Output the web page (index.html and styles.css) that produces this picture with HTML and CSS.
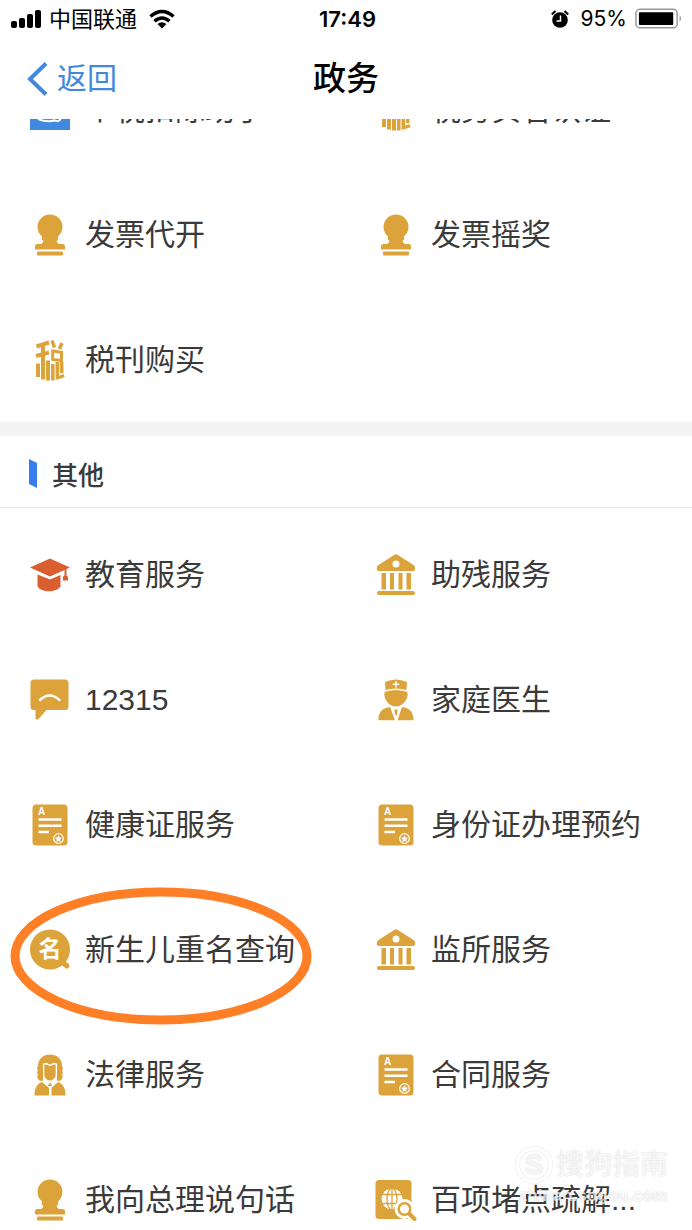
FILE: index.html
```html
<!DOCTYPE html>
<html lang="zh-CN">
<head>
<meta charset="utf-8">
<meta name="viewport" content="width=device-width, initial-scale=1">
<title>政务</title>
<link rel="stylesheet" href="styles.css">
</head>
<body>
<svg class="defs" aria-hidden="true">
  <symbol id="stamp" viewBox="0 0 44 44">
    <path d="M22 1.500C15 1.500 9.500 7 9.500 14c0 4.500 2.200 7.500 4.600 9.400-.8 2 0 3.600 1.200 4.300-.2 1.500-1 2.800-2.300 3.300H9.500A2.500 2.500 0 0 0 7 33.500V36.500h30v-3a2.500 2.500 0 0 0-2.500-2.500H31c-1.300-.5-2.100-1.800-2.300-3.300 1.200-.7 2-2.300 1.200-4.300 2.400-1.900 4.600-4.900 4.600-9.400C34.500 7 29 1.500 22 1.500Z"/>
    <rect x="9" y="38.500" width="26" height="4" rx="1"/>
  </symbol>
  <symbol id="tax" viewBox="0 0 44 44">
    <g fill="none" stroke="currentColor">
      <path stroke-width="4" d="M8.500 8.500 21 4.500M8 18 21 14.500M15 7v34.500M10 25.500V39M20 22.500V42.500"/>
      <path stroke-width="3.500" d="M24 2.500l2.500 7M34 5l-2.500 6"/>
      <path stroke-width="3" d="M24.700 13v8.500l8.800 1V14.200z"/>
      <path stroke-width="3.500" d="M24.800 26V42.500M29.300 24V41.500M33.700 24v11M31 39.500l5-2"/>
    </g>
  </symbol>
  <symbol id="bank" viewBox="0 0 44 44">
    <path fill-rule="evenodd" d="M20.500 1.800a3 3 0 0 1 3 0L39.500 12c2.500 1.500 2 6 0 6H4.500c-2 0-2.500-4.500 0-6ZM22 7.500a3.500 3.500 0 1 0 0 7 3.500 3.500 0 0 0 0-7Z"/>
    <path d="M7.500 20h4.500V36.500H7.500zM16 20h4V36.500h-4zM24.500 20h4V36.500h-4zM32.500 20h4.500V36.500h-4.500z"/>
    <rect x="3" y="38" width="38" height="4" rx="2"/>
  </symbol>
  <symbol id="cap" viewBox="0 0 44 44">
    <path d="M22 5.500 2 14.500l20 9 14.500-6.500v5.500c-2 1.200-1.500 2-1.500 5h5c0-3 .3-4-1.500-5v-6.500L42 14.500Z"/>
    <path d="M9.500 21.500v12c4 6.300 19 6.300 23 0V22L22 26.500Z"/>
  </symbol>
  <symbol id="chat" viewBox="0 0 44 44">
    <path d="M6 1.500h31A3.500 3.500 0 0 1 40.500 5V28.500A3.500 3.500 0 0 1 37 32H18.500L10.500 41Q8 42.500 7.500 40.500V32H6A3.500 3.500 0 0 1 2.500 28.500V5A3.500 3.500 0 0 1 6 1.500Z"/>
    <path d="M12 22q9.500-9 19.500 0" fill="none" stroke="#fff" stroke-width="2.500" stroke-linecap="round"/>
  </symbol>
  <symbol id="doctor" viewBox="0 0 44 44">
    <path d="M11 4Q22-1 33 4l-.5 8Q22 9 11.500 12Z"/>
    <path d="M22 3v6.500M18.800 6.200h6.400" stroke="#fff" stroke-width="1.500"/>
    <path d="M11.500 13.800q10.500-3.500 21 0c1 0 1.500 2 1 4-1 6-6 10.700-11.500 10.700S11.500 24 10.500 17.800c-.5-2 0-4 1-4Z"/>
    <path d="M16 29 21 42.300H5.500q-1.500 0-1-2.300c1-7.500 5-10 11.500-11ZM28 29l-4.500 13.300H38.500q1.500 0 1-2.300c-1-7.500-5-10-11.500-11ZM20.300 31.500h3.400l-.7 6h-1.500Z"/>
  </symbol>
  <symbol id="cert" viewBox="0 0 44 44">
    <rect x="4.500" y="1.500" width="35" height="41" rx="3.500"/>
    <path d="M10.500 16.500h23M10.500 22.700h23M10.500 29H21" stroke="#fff" stroke-width="2.500"/>
    <circle cx="30.500" cy="35.500" r="4.800" fill="none" stroke="#fff" stroke-width="1.200"/>
    <path d="m30.500 32 1.100 2.400 2.500.3-1.900 1.700.5 2.500-2.200-1.200-2.200 1.200.5-2.500-1.900-1.700 2.500-.3Z" fill="#fff"/>
  </symbol>
  <symbol id="name" viewBox="0 0 44 44">
    <circle cx="22" cy="21.500" r="20"/>
    <path d="m33 33 6 5" stroke="currentColor" stroke-width="5" stroke-linecap="round"/>
  </symbol>
  <symbol id="judge" viewBox="0 0 44 44">
    <path d="M22 1.500C14 1.500 10 7 10 13c-1.500 2-1 3.500 0 4.500-1.300 1.500-1 3 0 4.200-1 1.500-.8 3 .2 4.300 1 2 3 2.500 5 1.500l-.4-17 3.700-.8 3.500 2 3.500-2 3.700.8-.4 17c2 1 4 .5 5-1.500 1-1.300 1.200-2.800.2-4.300 1-1.200 1.300-2.700 0-4.200 1-1 1.500-2.500 0-4.500 0-6-4-11.500-12-11.500Z"/>
    <path d="M16.300 11.500q3 0 5.700 1.500 2.700-1.500 5.700-1.500v9.500c0 4-3 6.500-5.700 6.500s-5.700-2.500-5.700-6.500Z"/>
    <path d="M14 29 21 35V42.500H6.500c0-7 2-11.500 7.500-13.500ZM30 29l-6.500 6v7.500h14c0-7-2-11.500-7.500-13.500Z"/>
    <path d="M22 29.500 19.500 33h5Z"/>
  </symbol>
  <symbol id="globe" viewBox="0 0 44 44">
    <rect x="1.500" y="2" width="36" height="39" rx="3.500"/>
    <g fill="none" stroke="#fff">
      <circle cx="18" cy="21" r="10.500" fill="#fff" stroke="none"/>
      <path d="M7 16.500h22M7 25.500h22M18 10v22" stroke="currentColor" stroke-width="1.300"/>
      <ellipse cx="18" cy="21" rx="5" ry="11" stroke="currentColor" stroke-width="1.300"/>
      <path d="m36 37 6 5" stroke-width="8"/>
      <circle cx="30.500" cy="31" r="8.500" fill="currentColor" stroke-width="3"/>
      <path d="m34.500 35 6 6" stroke="currentColor" stroke-width="4" stroke-linecap="round"/>
      <circle cx="30.500" cy="31" r="4.500" fill="#fff" stroke="none"/>
    </g>
  </symbol>
  <symbol id="card" viewBox="0 0 44 44">
    <rect x="2" y="2" width="40" height="40"/>
    <path d="M10 31q10 4 17 1M26 32q5 3 7-2" fill="none" stroke="#fff" stroke-width="2"/>
  </symbol>
</svg>

<header class="top">
  <div class="status">
    <div class="status-left">
      <svg class="signal" viewBox="0 0 30 20"><rect y="12" width="6" height="7" rx="2"/><rect x="8" y="9" width="6" height="10" rx="2"/><rect x="16" y="5" width="6" height="14" rx="2"/><rect x="24" y="1" width="6" height="18" rx="2"/></svg>
      <span>中国联通</span>
      <svg class="wifi" viewBox="0 0 26 20"><g fill="none" stroke="currentColor" stroke-width="3.500"><path d="M1.500 7.500q11.500-10 23 0"/><path d="M5.500 12.300q7.500-6.500 15 0"/></g><path d="m8.500 15 4.500 4.500 4.500-4.500q-4.500-3.500-9 0Z"/></svg>
    </div>
    <time class="clock">17:49</time>
    <div class="status-right">
      <svg class="alarm" viewBox="0 0 18 18"><circle cx="9" cy="10" r="7.800"/><path d="M9.500 5.500V11H5.500" fill="none" stroke="#fff" stroke-width="1.500"/><path d="M.8 4.500 4.500 1M17.200 4.500 13.500 1" stroke="currentColor" stroke-width="2"/></svg>
      <span>95%</span>
      <svg class="battery" viewBox="0 0 50 22"><rect x="1" y="1" width="42" height="19" rx="4" fill="none" stroke="#999" stroke-width="1.500"/><rect x="4" y="4" width="35" height="13" rx="1"/><path d="M45.500 7q3 3.500 0 7Z" fill="#999"/></svg>
    </div>
  </div>
  <nav class="nav">
    <a class="back" href="#"><svg viewBox="0 0 22 34"><path d="M20 1.500 4 17l16 15.500" fill="none" stroke="currentColor" stroke-width="4"/></svg>返回</a>
    <h1>政务</h1>
  </nav>
</header>

<main class="content">
  <section class="grid grid-scrolled">
    <a class="item" href="#"><span class="icon blue"><svg><use href="#card"/></svg></span><span>个税扣除助手</span></a>
    <a class="item" href="#"><span class="icon"><svg><use href="#tax"/></svg></span><span>税务实名认证</span></a>
    <a class="item" href="#"><span class="icon"><svg><use href="#stamp"/></svg></span><span>发票代开</span></a>
    <a class="item" href="#"><span class="icon"><svg><use href="#stamp"/></svg></span><span>发票摇奖</span></a>
    <a class="item" href="#"><span class="icon"><svg><use href="#tax"/></svg></span><span>税刊购买</span></a>
  </section>

  <section class="group">
    <h2><svg class="marker" viewBox="0 0 8 29"><path d="M0 0 8 4V29L0 25Z"/></svg>其他</h2>
    <div class="grid">
      <a class="item" href="#"><span class="icon red"><svg><use href="#cap"/></svg></span><span>教育服务</span></a>
      <a class="item" href="#"><span class="icon"><svg><use href="#bank"/></svg></span><span>助残服务</span></a>
      <a class="item" href="#"><span class="icon"><svg><use href="#chat"/></svg></span><span>12315</span></a>
      <a class="item" href="#"><span class="icon"><svg><use href="#doctor"/></svg></span><span>家庭医生</span></a>
      <a class="item" href="#"><span class="icon"><svg><use href="#cert"/></svg><b class="cert-letter">A</b></span><span>健康证服务</span></a>
      <a class="item" href="#"><span class="icon"><svg><use href="#cert"/></svg><b class="cert-letter">A</b></span><span>身份证办理预约</span></a>
      <a class="item" href="#"><span class="icon"><svg><use href="#name"/></svg><b class="name-letter">名</b></span><span>新生儿重名查询</span><svg class="ring" viewBox="0 0 302 138"><ellipse cx="151" cy="69" rx="146" ry="64" fill="none" stroke="#ff7f27" stroke-width="9"/></svg></a>
      <a class="item" href="#"><span class="icon"><svg><use href="#bank"/></svg></span><span>监所服务</span></a>
      <a class="item" href="#"><span class="icon"><svg><use href="#judge"/></svg></span><span>法律服务</span></a>
      <a class="item" href="#"><span class="icon"><svg><use href="#cert"/></svg><b class="cert-letter">A</b></span><span>合同服务</span></a>
      <a class="item" href="#"><span class="icon"><svg><use href="#stamp"/></svg></span><span>我向总理说句话</span></a>
      <a class="item" href="#"><span class="icon"><svg><use href="#globe"/></svg></span><span>百项堵点疏解...</span></a>
    </div>
  </section>
</main>

<div class="watermark">
  <div class="brand"><span class="brand-mark">S</span>搜狗指南</div>
  <div class="site">zhinan.sogou.com</div>
</div>
</body>
</html>
```

FILE: styles.css
```css
* { box-sizing: border-box; }

body {
  position: relative;
  display: flex;
  flex-direction: column;
  height: 100vh;
  margin: 0;
  overflow: hidden;
  background: #fff;
  color: #3a3a3a;
  font-family: "Liberation Sans", "Noto Sans CJK SC", sans-serif;
}

a { color: inherit; text-decoration: none; }
svg { flex: none; fill: currentColor; }
.defs { position: absolute; width: 0; height: 0; }

.top { flex: none; background: #fff; color: #000; }

.status {
  display: grid;
  grid-template-columns: 1fr auto 1fr;
  align-items: center;
  height: 38px;
  padding: 0 8px 0 11px;
  font-family: Inter, "Noto Sans CJK SC", sans-serif;
  font-size: 22px;
  line-height: 30px;
}
.status-left, .status-right { display: flex; align-items: center; gap: 8px; }
.status-left .wifi { margin-left: 4px; }
.status-right { justify-content: flex-end; }
.signal { width: 30px; height: 20px; }
.wifi { width: 26px; height: 20px; }
.alarm { width: 18px; height: 18px; margin-right: 4px; }
.status-right span { font-size: 21px; }
.battery { width: 49px; height: 22px; }
.clock { font-size: 22px; font-weight: 600; }

.nav {
  display: grid;
  grid-template-columns: 1fr auto 1fr;
  align-items: center;
  height: 81px;
  padding: 0 26px;
}
.back {
  display: flex;
  align-items: center;
  gap: 9px;
  color: #4189de;
  font-size: 30px;
  line-height: 40px;
}
.back svg { width: 22px; height: 34px; }
.nav h1 { margin: 0; font-size: 33px; font-weight: 500; line-height: 40px; }

.content { flex: 1; min-height: 0; overflow: hidden; }

.grid {
  display: grid;
  grid-template-columns: 1fr 1fr;
  grid-auto-rows: 125px;
}
.grid-scrolled { margin-top: -72px; }

.item {
  position: relative;
  display: flex;
  align-items: center;
  gap: 13px;
  padding-left: 28px;
  font-size: 30px;
  line-height: 40px;
  white-space: nowrap;
}
.icon { position: relative; flex: none; width: 44px; height: 44px; color: #dba33a; }
.icon svg { display: block; width: 44px; height: 44px; }
.icon.blue { color: #4189de; }
.icon.red { color: #d95f30; }
.cert-letter {
  position: absolute;
  top: 3px;
  left: 10px;
  color: #fff;
  font-size: 10px;
  line-height: 12px;
}
.name-letter {
  position: absolute;
  inset: 0;
  color: #fff;
  font-size: 23px;
  line-height: 42px;
  text-align: center;
}

.ring {
  position: absolute;
  top: 0;
  left: 10px;
  width: 302px;
  height: 138px;
}

.group { border-top: 14px solid #f4f4f4; }
.group h2 {
  display: flex;
  align-items: center;
  gap: 15px;
  height: 72px;
  margin: 0 0 4px;
  padding: 4px 29px 0;
  border-bottom: 1px solid #e6e6e6;
  font-size: 26px;
  font-weight: 500;
}
.marker { width: 8px; height: 29px; color: #377df0; }

.watermark {
  position: absolute;
  right: 24px;
  bottom: 22px;
  color: rgba(255, 255, 255, .75);
  text-shadow: 0 0 2px rgba(0, 0, 0, .18);
  pointer-events: none;
}
.brand {
  display: flex;
  align-items: center;
  gap: 4px;
  font-size: 28px;
  line-height: 38px;
}
.brand-mark {
  width: 36px;
  height: 36px;
  border: 3px solid rgba(255, 255, 255, .8);
  border-radius: 50%;
  box-shadow: 0 0 2px rgba(0, 0, 0, .18), inset 0 0 2px rgba(0, 0, 0, .18);
  font-weight: 700;
  line-height: 30px;
  text-align: center;
}
.site { font-size: 17px; font-weight: 700; line-height: 24px; text-align: right; }
```
